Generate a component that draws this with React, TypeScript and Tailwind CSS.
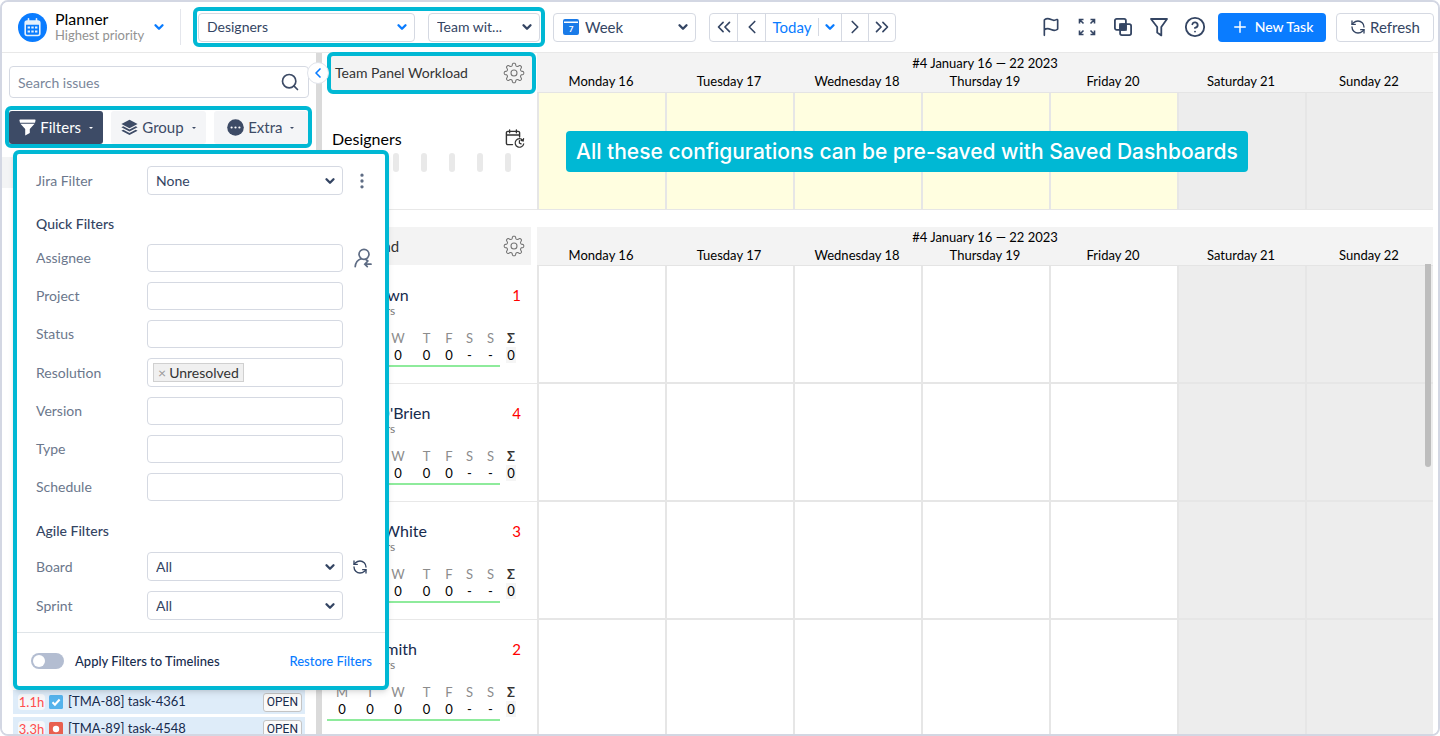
import { useState } from 'react';
import type { ReactNode } from 'react';
import { ChevronDown, ChevronLeft, ChevronRight, ChevronsLeft, ChevronsRight, CircleHelp, EllipsisVertical, Flag, Plus, RefreshCcw, Search } from 'lucide-react';

const DAYS = ['Monday 16', 'Tuesday 17', 'Wednesday 18', 'Thursday 19', 'Friday 20', 'Saturday 21', 'Sunday 22'];
const PERIOD = '#4 January 16 — 22 2023';

const MEMBERS = [
  { name: 'Jo Brown', count: 1 },
  { name: "Paul O'Brien", count: 4 },
  { name: 'Anna White', count: 3 },
  { name: 'Tom Smith', count: 2 },
];

const WORKLOAD = [
  { day: 'M', value: '0', width: 'w-[30px]' },
  { day: 'T', value: '0', width: 'w-[26px]' },
  { day: 'W', value: '0', width: 'w-[30px]' },
  { day: 'T', value: '0', width: 'w-[27px]' },
  { day: 'F', value: '0', width: 'w-[18px]' },
  { day: 'S', value: '-', width: 'w-[23px]' },
  { day: 'S', value: '-', width: 'w-[19px]' },
];

const QUICK_FILTERS = ['Assignee', 'Project', 'Status', 'Resolution', 'Version', 'Type', 'Schedule'];

const TASKS = [
  { key: 'TMA-88', title: 'task-4361', hours: '1.1h', type: 'task' },
  { key: 'TMA-89', title: 'task-4548', hours: '3.3h', type: 'bug' },
];

// eight rounded teeth, one of them pointing up
const GEAR_OUTLINE = Array.from({ length: 160 }, (_, step) => {
  const angle = (step / 160) * Math.PI * 2;
  const radius = 8.5 + 1.3 * Math.tanh(2 * Math.cos(angle * 8));
  return `${(11 + radius * Math.sin(angle)).toFixed(2)},${(11 - radius * Math.cos(angle)).toFixed(2)}`;
}).join(' ');

function GearIcon() {
  return (
    <svg viewBox="0 0 22 22" className="h-[22px] w-[22px]" fill="none" stroke="currentColor" strokeWidth="1.1">
      <polygon points={GEAR_OUTLINE} strokeLinejoin="round" />
      <circle cx="11" cy="11" r="3" />
    </svg>
  );
}

function CalendarLogo() {
  return (
    <svg viewBox="0 0 29 29" className="h-[29px] w-[29px] shrink-0">
      <circle cx="14.5" cy="14.5" r="14.5" fill="#0a7cff" />
      <rect x="7.2" y="8" width="14.6" height="14.5" rx="2" fill="none" stroke="#e8f1fb" strokeWidth="1.6" />
      <path d="M7 8h15v3.8H7z" fill="#e8f1fb" />
      <path d="M10.5 5.8v3M18.5 5.8v3" stroke="#e8f1fb" strokeWidth="1.6" strokeLinecap="round" />
      <g fill="#e8f1fb">
        <path d="M9.6 13.6h2.4v2H9.6zM13.3 13.6h2.4v2h-2.4zM17 13.6h2.4v2H17z" />
        <path d="M9.6 17.6h2.4v2H9.6zM13.3 17.6h2.4v2h-2.4zM17 17.6h2.4v2H17z" />
      </g>
    </svg>
  );
}

function WeekIcon() {
  return (
    <svg viewBox="0 0 16 16" className="pointer-events-none absolute left-[10px] h-4 w-4">
      <rect width="16" height="16" rx="2" fill="#1a7be8" />
      <path d="M1 3.2h14" stroke="#fff" strokeWidth="1.6" />
      <text x="8" y="12.6" textAnchor="middle" fontSize="8" fontWeight="700" fill="#fff">7</text>
    </svg>
  );
}

function ExpandIcon() {
  return (
    <svg viewBox="0 0 18 18" className="h-[18px] w-[18px]" fill="none" stroke="currentColor" strokeWidth="1.6">
      <path d="M1.5 5.5v-4h4M1.8 1.8l3.7 3.7M12.5 1.5h4v4M16.2 1.8l-3.7 3.7M1.5 12.5v4h4M1.8 16.2l3.7-3.7M16.5 12.5v4h-4M16.2 16.2l-3.7-3.7" />
    </svg>
  );
}

function OverlapIcon() {
  return (
    <svg viewBox="0 0 20 20" className="h-5 w-5" fill="none" stroke="currentColor" strokeWidth="1.8">
      <rect x="1.9" y="1.9" width="11" height="11" rx="1.8" />
      <rect x="7.1" y="7.1" width="11" height="11" rx="1.8" />
      <path d="M7.1 7.1h5.8v5.8H7.1z" fill="currentColor" />
    </svg>
  );
}

function FunnelIcon() {
  return (
    <svg viewBox="0 0 20 20" className="h-5 w-5" fill="none" stroke="currentColor" strokeWidth="1.8" strokeLinejoin="round">
      <path d="M2 2h16l-5.7 8v8.4L8.2 15.5V10z" />
    </svg>
  );
}

function FilterSolidIcon() {
  return (
    <svg viewBox="0 0 17 17" className="h-[17px] w-[17px]" fill="currentColor">
      <path d="M1.2.6h14.6q.9 0 .7 1l-.5 2.2H1L.5 1.6q-.2-1 .7-1z" />
      <path d="M1.4 4.8h14.2L10.8 10v4L6.2 16.5V10z" />
    </svg>
  );
}

function LayersIcon() {
  return (
    <svg viewBox="0 0 17 17" className="h-[17px] w-[17px]" fill="currentColor">
      <path d="M8.5.7 16.6 5 8.5 9.3.4 5z" />
      <path d="m2.3 7.3 6.2 3.3 6.2-3.3 1.9 1-8.1 4.2L.4 8.3z" />
      <path d="m2.3 10.8 6.2 3.3 6.2-3.3 1.9 1-8.1 4.3L.4 11.8z" />
    </svg>
  );
}

function MoreIcon() {
  return (
    <svg viewBox="0 0 17 17" className="h-[17px] w-[17px]">
      <circle cx="8.5" cy="8.5" r="8.3" fill="currentColor" />
      <g fill="#fff">
        <circle cx="4.6" cy="8.5" r="1.1" />
        <circle cx="8.5" cy="8.5" r="1.1" />
        <circle cx="12.4" cy="8.5" r="1.1" />
      </g>
    </svg>
  );
}

function CalendarClockIcon() {
  return (
    <svg viewBox="0 0 20 20" className="h-5 w-5" fill="none" stroke="currentColor" strokeWidth="1.4" strokeLinecap="round">
      <path d="M7.5 15.6H2.8a1.4 1.4 0 0 1-1.4-1.4V3.8a1.4 1.4 0 0 1 1.4-1.4h10.4a1.4 1.4 0 0 1 1.4 1.4V8M1.4 6h13.2M4.6 1v2.8M11.4 1v2.8" />
      <path d="M17.8 11.2a4.3 4.3 0 1 0 .9 3.6M18.6 9.6l-.4 2.3-2.2-.5M14.4 11.6v2.5l1.7.8" strokeWidth="1.2" />
    </svg>
  );
}

function AssigneeIcon() {
  return (
    <svg viewBox="0 0 18 20" className="h-5 w-[18px]" fill="none" stroke="currentColor" strokeWidth="1.7" strokeLinecap="round">
      <circle cx="10" cy="6.3" r="5" />
      <path d="M1.2 18.7C1.6 14.6 4 11.8 7.2 10.8M11.5 11.3l2.4 1.7M17 16.2h-6M13.3 13.7l-2.5 2.5 2.5 2.5" />
    </svg>
  );
}

interface SelectBoxProps {
  label: string;
  value: string;
  id?: string;
  width: string;
  padding?: string;
  chevron?: string;
  icon?: ReactNode;
}

function SelectBox({ label, value, id, width, padding = 'pl-2', chevron = 'text-[#344563]', icon }: SelectBoxProps) {
  return (
    <div className={`relative flex h-[29px] shrink-0 items-center ${width}`}>
      <select
        id={id}
        aria-label={label}
        className={`h-full w-full appearance-none truncate rounded border border-[#d5d9e2] bg-white pr-6 ${padding}`}
      >
        <option>{value}</option>
      </select>
      {icon}
      <ChevronDown strokeWidth={4} className={`pointer-events-none absolute right-[6px] h-[14px] w-[14px] ${chevron}`} />
    </div>
  );
}

function Header() {
  return (
    <header className="flex h-[51px] shrink-0 items-center border-b border-[#e8e8e8] bg-white pr-1 text-[#344563]">
      <button className="flex w-[178px] shrink-0 items-center gap-2 pl-4 text-left">
        <CalendarLogo />
        <span className="whitespace-nowrap">
          <span className="block text-base leading-4 text-black">Planner</span>
          <span className="block text-[13px] leading-4 text-[#929292]">Highest priority</span>
        </span>
        <ChevronDown strokeWidth={4} className="h-[14px] w-[14px] shrink-0 text-[#0a7cff]" />
      </button>
      <div className="h-9 w-px shrink-0 bg-[#e4e6ec]" />
      <div className="ml-3 flex h-10 shrink-0 items-center gap-[13px] rounded-md border-4 border-[#00b8d4] px-px text-sm">
        <SelectBox label="Team" value="Designers" width="w-[217px]" chevron="text-[#0a7cff]" />
        <SelectBox label="Panel" value="Team wit..." width="w-[112px]" />
      </div>
      <div className="ml-2 text-[15px]">
        <SelectBox label="Scale" value="Week" width="w-[143px]" padding="pl-[31px]" icon={<WeekIcon />} />
      </div>
      <nav className="ml-[13px] flex h-[29px] shrink-0 divide-x divide-[#d5d9e2] rounded border border-[#d5d9e2]">
        <button aria-label="Two weeks back" className="flex w-7 items-center justify-center">
          <ChevronsLeft strokeWidth={1.8} className="h-[22px] w-[22px]" />
        </button>
        <button aria-label="Previous week" className="flex w-7 items-center justify-center">
          <ChevronLeft strokeWidth={1.8} className="h-[22px] w-[22px]" />
        </button>
        <div className="flex w-[76px] items-center text-[#0a7cff]">
          <button className="w-[52px] text-[15px]">Today</button>
          <button aria-label="Pick a date" className="flex h-[18px] flex-1 items-center justify-center border-l border-[#d5d9e2]">
            <ChevronDown strokeWidth={4} className="h-[14px] w-[14px]" />
          </button>
        </div>
        <button aria-label="Next week" className="flex w-[27px] items-center justify-center">
          <ChevronRight strokeWidth={1.8} className="h-[22px] w-[22px]" />
        </button>
        <button aria-label="Two weeks ahead" className="flex w-[26px] items-center justify-center">
          <ChevronsRight strokeWidth={1.8} className="h-[22px] w-[22px]" />
        </button>
      </nav>
      <div className="ml-auto flex items-center gap-3">
        <button aria-label="Milestones" className="flex w-6 justify-center"><Flag className="h-5 w-5" /></button>
        <button aria-label="Full screen" className="flex w-6 justify-center"><ExpandIcon /></button>
        <button aria-label="Overlap" className="flex w-6 justify-center"><OverlapIcon /></button>
        <button aria-label="Filter" className="flex w-6 justify-center"><FunnelIcon /></button>
        <button aria-label="Help" className="flex w-6 justify-center"><CircleHelp className="h-[22px] w-[22px]" /></button>
      </div>
      <button className="ml-[11px] flex h-[29px] w-[108px] shrink-0 items-center justify-center gap-[6px] rounded bg-[#0a7cff] text-sm font-medium text-white">
        <Plus className="h-[18px] w-[18px]" strokeWidth={2} />
        New Task
      </button>
      <button className="ml-[10px] flex h-[29px] w-[98px] shrink-0 items-center justify-center gap-1 rounded border border-[#d5d9e2] text-[15px]">
        <RefreshCcw className="h-4 w-4" />
        Refresh
      </button>
    </header>
  );
}

function FilterRow({ id, label, children }: { id: string; label: string; children: ReactNode }) {
  return (
    <div className="flex items-center">
      <label htmlFor={id} className="w-[111px] shrink-0 text-[#6b778c]">{label}</label>
      {children}
    </div>
  );
}

function FiltersPanel() {
  const [applyToTimelines, setApplyToTimelines] = useState(false);

  return (
    <div className="absolute top-[97px] left-[11px] z-20 w-[376px] rounded-md border-4 border-[#00b8d4] bg-white pt-3 text-sm text-[#344563] shadow-md">
      <div className="pl-[19px]">
        <FilterRow id="jira-filter" label="Jira Filter">
          <SelectBox id="jira-filter" label="Jira Filter" value="None" width="w-[196px]" />
          <button aria-label="Filter options" className="ml-[9px] text-[#5e6c84]">
            <EllipsisVertical className="h-5 w-5" />
          </button>
        </FilterRow>

        <h2 className="mt-[19px] mb-[10px] h-5 leading-5 font-medium">Quick Filters</h2>
        <div className="flex flex-col gap-[10px]">
          {QUICK_FILTERS.map((name) => (
            <FilterRow key={name} id={name} label={name}>
              {name === 'Resolution' ? (
                <div className="flex h-[29px] w-[196px] items-center rounded border border-[#d5d9e2] px-[5px]">
                  <span className="flex h-[19px] shrink-0 items-center gap-[3px] border border-[#d0d0d0] bg-[#f0f0f0] px-1 text-[#333]">
                    <button aria-label="Remove Unresolved" className="text-[#999]">×</button>
                    Unresolved
                  </span>
                  <input id={name} className="min-w-0 flex-1 outline-none" />
                </div>
              ) : (
                <input id={name} className="h-7 w-[196px] rounded border border-[#d5d9e2] px-2" />
              )}
              {name === 'Assignee' ? (
                <button aria-label="Assign to me" className="ml-[11px] text-[#5e6c84]">
                  <AssigneeIcon />
                </button>
              ) : null}
            </FilterRow>
          ))}
        </div>

        <h2 className="mt-5 mb-[11px] h-5 leading-5 font-medium">Agile Filters</h2>
        <div className="flex flex-col gap-[10px]">
          <FilterRow id="board" label="Board">
            <SelectBox id="board" label="Board" value="All" width="w-[196px]" />
            <button aria-label="Reload boards" className="ml-[9px]">
              <RefreshCcw className="h-4 w-4" />
            </button>
          </FilterRow>
          <FilterRow id="sprint" label="Sprint">
            <SelectBox id="sprint" label="Sprint" value="All" width="w-[196px]" />
          </FilterRow>
        </div>
      </div>

      <div className="mt-3 flex h-[54px] items-center border-t border-[#dfe4e8] pt-[3px] pr-[13px] pl-[14px] text-[13px] font-medium">
        <label className="flex items-center gap-[11px] text-[#172b4d]">
          <input
            type="checkbox"
            role="switch"
            checked={applyToTimelines}
            onChange={(event) => setApplyToTimelines(event.target.checked)}
            className="h-4 w-[33px] appearance-none rounded-full bg-[#b3bdd1] p-0.5 before:block before:h-3 before:w-3 before:rounded-full before:bg-white checked:bg-[#0a7cff] checked:before:ml-auto"
          />
          Apply Filters to Timelines
        </label>
        <button className="ml-auto text-[#0a7cff]">Restore Filters</button>
      </div>
    </div>
  );
}

function Sidebar() {
  return (
    <aside className="relative z-10 flex w-[314px] shrink-0 flex-col bg-white text-[#3d4b66]">
      <div className="relative mx-[7px] mt-[13px] flex h-8 shrink-0 items-center">
        <input
          aria-label="Search issues"
          placeholder="Search issues"
          className="h-full w-full rounded border border-[#d5d9e2] pr-9 pl-2 text-sm placeholder:text-[#7a869a]"
        />
        <Search className="absolute right-[9px] h-5 w-5" />
      </div>

      <div className="mt-2 mr-1 ml-[3px] grid h-[42px] shrink-0 grid-cols-3 gap-2 rounded-md border-4 border-[#00b8d4] pt-px text-[15px]">
        <button className="flex items-center justify-center gap-1 rounded-[3px] bg-[#3d4b66] text-white">
          <FilterSolidIcon />
          Filters
          <span className="ml-1 border-x-2 border-t-2 border-x-transparent" />
        </button>
        <button className="flex items-center justify-center gap-1 rounded-[3px] bg-[#f4f5f7]">
          <LayersIcon />
          Group
          <span className="ml-1 border-x-2 border-t-2 border-x-transparent" />
        </button>
        <button className="flex items-center justify-center gap-1 rounded-[3px] bg-[#f4f5f7]">
          <MoreIcon />
          Extra
          <span className="ml-1 border-x-2 border-t-2 border-x-transparent" />
        </button>
      </div>

      <div className="mt-[9px] h-[31px] shrink-0 bg-[#f3f4f5]" />

      <ul className="mr-[11px] -mb-[7px] ml-[11px] flex flex-1 flex-col justify-end gap-[3px] text-[13px] text-[#172b4d]">
        {TASKS.map((task) => (
          <li key={task.key} className="flex h-6 items-center bg-[#deecf9] pr-[3px] pl-[5px]">
            <span className="w-[27px] rounded-sm bg-[#f5f7fa] text-center leading-4 text-[#ff4d4d]">{task.hours}</span>
            <svg viewBox="0 0 14 14" className="mr-[5px] ml-1 h-[14px] w-[14px]">
              <rect width="14" height="14" rx="1.5" fill={task.type === 'bug' ? '#e8604f' : '#55b3ec'} />
              {task.type === 'bug' ? (
                <circle cx="7" cy="7" r="3.2" fill="#fff" />
              ) : (
                <path d="m3.5 7.3 2.4 2.4 4.7-5.2" fill="none" stroke="#fff" strokeWidth="2" />
              )}
            </svg>
            <span>[{task.key}] {task.title}</span>
            <span className="ml-auto rounded-[3px] border border-[#c4c4c4] bg-[#fafafa] px-[3px] font-[Roboto,sans-serif] text-xs leading-[17px] text-[#172b4d]">OPEN</span>
          </li>
        ))}
      </ul>

      <button aria-label="Collapse sidebar" className="absolute top-[9px] -right-[13px] flex h-[22px] w-[22px] items-center justify-center rounded-full border border-[#e0e3ea] bg-white text-[#0a7cff]">
        <ChevronLeft className="h-4 w-4" strokeWidth={2.5} />
      </button>
      <FiltersPanel />
    </aside>
  );
}

function CalendarHeader({ height }: { height: string }) {
  return (
    <div className={`shrink-0 border-b border-[#e4e4e4] bg-[#f3f3f3] pt-px text-center text-[13px] text-black ${height}`}>
      <div className="h-[18px] leading-[18px]">{PERIOD}</div>
      <div className="grid grid-cols-7 leading-[18px]">
        {DAYS.map((day) => (
          <div key={day}>{day}</div>
        ))}
      </div>
    </div>
  );
}

function CalendarRow({ height, workday, line }: { height: string; workday: string; line: string }) {
  return (
    <div className={`grid shrink-0 grid-cols-7 border-[#e6e6e6] ${line} ${height}`}>
      {DAYS.map((day, index) => (
        <div key={day} className={`border-l-2 border-[#e6e6e6] ${index > 4 ? 'bg-[#ededed]' : workday}`} />
      ))}
    </div>
  );
}

function MemberCell({ name, count }: { name: string; count: number }) {
  return (
    <div className="h-[118px] shrink-0 border-b border-[#e8e8e8] pt-5 pl-[5px]">
      <div className="flex justify-between pr-4 pl-4 text-base leading-[18px]">
        <span className="text-[#172b4d]">{name}</span>
        <span className="text-[15px] text-[#ff0000]">{count}</span>
      </div>
      <div className="pl-4 text-xs leading-[14px] text-[#7a7a7a]">Designers</div>
      <table className="mt-3 table-fixed text-center text-[13px] leading-[17px]">
        <thead className="text-[#8c8c8c]">
          <tr>
            {WORKLOAD.map((item, index) => (
              <th key={index} className={`p-0 font-normal ${item.width}`}>{item.day}</th>
            ))}
            <th className="w-[22px] p-0 font-bold text-[#333]">Σ</th>
          </tr>
        </thead>
        <tbody className="align-top text-black">
          <tr>
            {WORKLOAD.map((item, index) => (
              <td key={index} className="border-b-2 border-[#8eeb9c] p-0 pb-px">{item.value}</td>
            ))}
            <td className="p-0"><span className="bg-[#f5f5f5] px-px">0</span></td>
          </tr>
        </tbody>
      </table>
    </div>
  );
}

function Board() {
  return (
    <main className="relative flex min-w-0 flex-1 flex-col bg-white pr-[5px]">
      <section className="flex shrink-0">
        <div className="flex w-[215px] shrink-0 flex-col border-b border-[#e8e8e8]">
          <div className="relative -mt-px ml-[5px] flex h-[42px] w-[209px] items-center justify-between rounded-md border-4 border-[#00b8d4] bg-[#f3f3f3] pr-[7px] pl-1 text-sm text-[#333]">
            Team Panel Workload
            <button aria-label="Team panel settings" className="text-[#777]"><GearIcon /></button>
          </div>
          <div className="mt-[35px] flex items-center justify-between pr-3 pl-[10px] text-base leading-5 text-black">
            Designers
            <button aria-label="Schedule" className="text-[#333]"><CalendarClockIcon /></button>
          </div>
          <div className="mt-1 flex justify-end gap-[22px] pr-[26px]">
            {[0, 1, 2, 3, 4].map((bar) => (
              <span key={bar} className="h-[19px] w-[6px] rounded-sm bg-[#e9e9e9]" />
            ))}
          </div>
        </div>
        <div className="relative min-w-0 flex-1">
          <CalendarHeader height="h-10" />
          <CalendarRow height="h-[117px]" workday="bg-[#fffee0]" line="border-b" />
          <p className="absolute top-[78px] left-[29px] flex h-[41px] items-center rounded bg-[#00b8d4] px-[10px] font-[Inter,sans-serif] text-[21px] font-medium whitespace-nowrap text-white">
            All these configurations can be pre-saved with Saved Dashboards
          </p>
        </div>
      </section>

      <section className="mt-[17px] flex min-h-0 flex-1 overflow-hidden">
        <div className="w-[215px] shrink-0">
          <div className="mr-[6px] mb-px flex h-[38px] items-center justify-between bg-[#f3f3f3] pr-[6px] pl-[13px] text-[15px] text-[#333]">
            Workload
            <button aria-label="Workload settings" className="text-[#777]"><GearIcon /></button>
          </div>
          {MEMBERS.map((member) => (
            <MemberCell key={member.name} {...member} />
          ))}
        </div>
        <div className="min-w-0 flex-1">
          <CalendarHeader height="h-[39px]" />
          {MEMBERS.map((member) => (
            <CalendarRow key={member.name} height="h-[118px]" workday="bg-white" line="border-b-2" />
          ))}
        </div>
      </section>

      <div className="absolute top-[211px] right-[7px] h-[203px] w-[6px] rounded-b-full bg-[#bdbdbd]" />
    </main>
  );
}

export default function App() {
  return (
    <div className="flex h-screen flex-col overflow-hidden rounded-lg border-2 border-[#d3d7e3] bg-white font-[Lato,sans-serif]">
      <Header />
      <div className="flex min-h-0 flex-1">
        <Sidebar />
        <div className="w-[6px] shrink-0 bg-[#dadada]" />
        <Board />
      </div>
    </div>
  );
}
